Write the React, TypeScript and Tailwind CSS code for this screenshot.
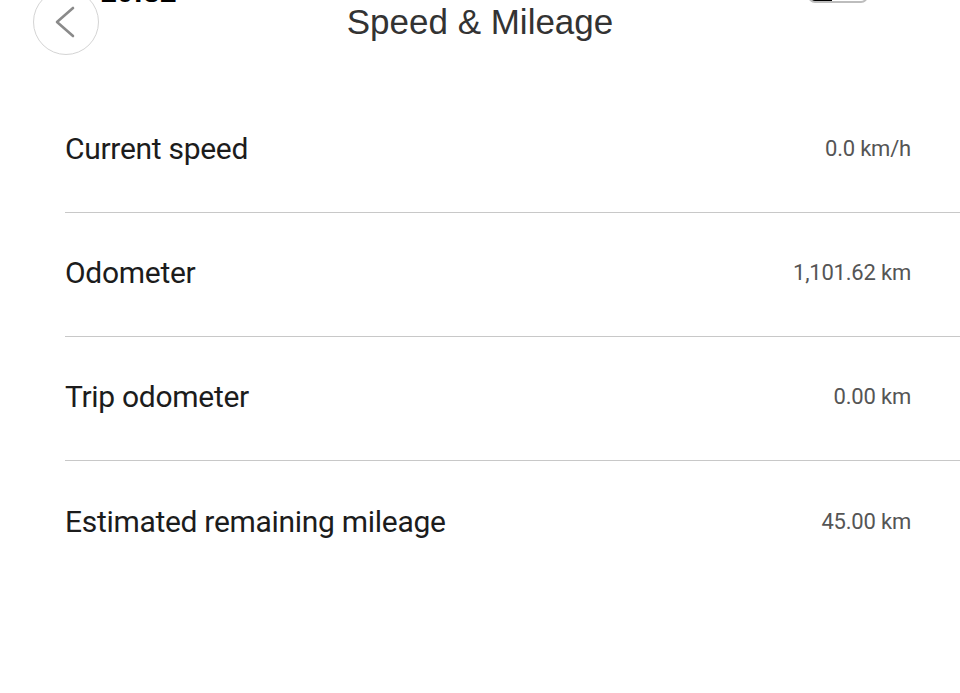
const rows = [
  { label: "Current speed", value: "0.0 km/h" },
  { label: "Odometer", value: "1,101.62 km" },
  { label: "Trip odometer", value: "0.00 km" },
  { label: "Estimated remaining mileage", value: "45.00 km" },
];

export default function App() {
  return (
    <div className="w-[960px] h-[693px] bg-white overflow-hidden font-['Roboto',sans-serif]">
      {/* status bar, scrolled mostly off the top */}
      <div className="flex items-end justify-between h-[30px] -mt-[26px] pl-[100px] pr-[92px] font-['Liberation_Sans',sans-serif]">
        <span className="text-[30px] leading-none font-bold text-black -mb-[3px]">10:32</span>
        <div className="w-[60px] h-[24px] mb-[1px] rounded-[7px] border-2 border-[#bdbdbd] overflow-hidden">
          <div className="w-[22px] h-full bg-black" />
        </div>
      </div>

      {/* header */}
      <div className="grid grid-cols-[1fr_auto_1fr] items-start h-[85px]">
        <button className="relative ml-[33px] -mt-[15px] w-[66px] h-[66px] rounded-full border border-[#d4d4d4] bg-white">
          <svg width="66" height="66" viewBox="0 0 66 66" className="-m-px">
            <polyline
              points="40,19 24,33 40,47"
              fill="none"
              stroke="#8a8a8a"
              strokeWidth="2.6"
              strokeLinecap="round"
              strokeLinejoin="round"
            />
          </svg>
        </button>
        <h1 className="-mt-[4px] text-[35px] leading-[44px] text-[#333] font-['Liberation_Sans',sans-serif]">
          Speed &amp; Mileage
        </h1>
        <div />
      </div>

      {/* list */}
      <div className="pl-[65px]">
        {rows.map((row, i) => (
          <div
            key={row.label}
            className={
              "flex items-center justify-between h-[124px] pr-[49px] pb-[4px] " +
              (i < rows.length - 1 ? "border-b border-[#c8c8c8]" : "")
            }
          >
            <span className="text-[30px] text-[#1c1c1c] tracking-[-0.3px]">{row.label}</span>
            <span className="text-[22px] text-[#555] tracking-[-0.2px]">{row.value}</span>
          </div>
        ))}
      </div>
    </div>
  );
}
